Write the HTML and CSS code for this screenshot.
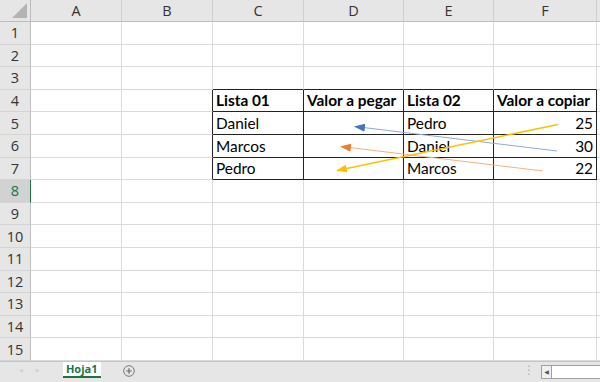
FILE: index.html
```html
<!DOCTYPE html>
<html lang="es">
<head>
  <meta charset="UTF-8">
  <meta name="viewport" content="width=device-width, initial-scale=1.0">
  <title>Hoja1 - Libro</title>
  <link rel="stylesheet" href="styles.css">
</head>
<body>
  <!-- Cuadricula de la hoja -->
  <div class="sheet">
    <div class="h corner"><span class="tri"></span></div><div class="h">A</div><div class="h">B</div><div class="h">C</div><div class="h">D</div><div class="h">E</div><div class="h">F</div><div class="h"></div>

    <div class="n">1</div><div class="c"></div><div class="c"></div><div class="c"></div><div class="c"></div><div class="c"></div><div class="c"></div><div class="c"></div>
    <div class="n">2</div><div class="c"></div><div class="c"></div><div class="c"></div><div class="c"></div><div class="c"></div><div class="c"></div><div class="c"></div>
    <div class="n">3</div><div class="c"></div><div class="c"></div><div class="c tt"></div><div class="c tt"></div><div class="c tt"></div><div class="c tt"></div><div class="c"></div>
    <div class="n">4</div><div class="c"></div><div class="c tl"></div><div class="c t b">Lista 01</div><div class="c t b">Valor a pegar</div><div class="c t b">Lista 02</div><div class="c t b">Valor a copiar</div><div class="c"></div>
    <div class="n">5</div><div class="c"></div><div class="c tl"></div><div class="c t">Daniel</div><div class="c t"></div><div class="c t">Pedro</div><div class="c t r">25</div><div class="c"></div>
    <div class="n">6</div><div class="c"></div><div class="c tl"></div><div class="c t">Marcos</div><div class="c t"></div><div class="c t">Daniel</div><div class="c t r">30</div><div class="c"></div>
    <div class="n">7</div><div class="c"></div><div class="c tl"></div><div class="c t">Pedro</div><div class="c t"></div><div class="c t">Marcos</div><div class="c t r">22</div><div class="c"></div>
    <div class="n sel">8</div><div class="c"></div><div class="c"></div><div class="c"></div><div class="c"></div><div class="c"></div><div class="c"></div><div class="c"></div>
    <div class="n">9</div><div class="c"></div><div class="c"></div><div class="c"></div><div class="c"></div><div class="c"></div><div class="c"></div><div class="c"></div>
    <div class="n">10</div><div class="c"></div><div class="c"></div><div class="c"></div><div class="c"></div><div class="c"></div><div class="c"></div><div class="c"></div>
    <div class="n">11</div><div class="c"></div><div class="c"></div><div class="c"></div><div class="c"></div><div class="c"></div><div class="c"></div><div class="c"></div>
    <div class="n">12</div><div class="c"></div><div class="c"></div><div class="c"></div><div class="c"></div><div class="c"></div><div class="c"></div><div class="c"></div>
    <div class="n">13</div><div class="c"></div><div class="c"></div><div class="c"></div><div class="c"></div><div class="c"></div><div class="c"></div><div class="c"></div>
    <div class="n">14</div><div class="c"></div><div class="c"></div><div class="c"></div><div class="c"></div><div class="c"></div><div class="c"></div><div class="c"></div>
    <div class="n">15</div><div class="c"></div><div class="c"></div><div class="c"></div><div class="c"></div><div class="c"></div><div class="c"></div><div class="c"></div>
  </div>

  <!-- Barra de hojas -->
  <div class="tabbar">
    <span class="nav">&#9664;</span>
    <span class="nav">&#9654;</span>
    <span class="tab">Hoja1</span>
    <svg class="add" width="12" height="12" viewBox="0 0 12 12">
      <circle cx="6" cy="6" r="5.3" fill="none" stroke="#7a7a7a" stroke-width="1"/>
      <path d="M6 3.2v5.6M3.2 6h5.6" stroke="#6a6a6a" stroke-width="1.2"/>
    </svg>
    <span class="spacer"></span>
    <span class="dots">&#8942;</span>
    <span class="scroll"><span class="scroll-btn">&#9664;</span></span>
  </div>

  <!-- Flechas dibujadas sobre la hoja -->
  <svg class="arrows" width="600" height="382" viewBox="0 0 600 382">
    <defs>
      <marker id="head-blue" markerUnits="userSpaceOnUse" markerWidth="11" markerHeight="8" refX="10" refY="4" orient="auto">
        <path d="M0 0L11 4L0 8z" fill="#4472c4"/>
      </marker>
      <marker id="head-orange" markerUnits="userSpaceOnUse" markerWidth="11" markerHeight="8" refX="10" refY="4" orient="auto">
        <path d="M0 0L11 4L0 8z" fill="#ed7d31"/>
      </marker>
      <marker id="head-yellow" markerUnits="userSpaceOnUse" markerWidth="11" markerHeight="8" refX="10" refY="4" orient="auto">
        <path d="M0 0L11 4L0 8z" fill="#ffc000"/>
      </marker>
    </defs>
    <line x1="557" y1="151" x2="355" y2="126.5" stroke="#8eaadb" stroke-width="1" marker-end="url(#head-blue)"/>
    <line x1="543" y1="171" x2="341" y2="146.5" stroke="#f4b183" stroke-width="1" marker-end="url(#head-orange)"/>
    <line x1="558" y1="124.5" x2="337" y2="170.5" stroke="#ffc000" stroke-width="1.6" marker-end="url(#head-yellow)"/>
  </svg>
</body>
</html>
```

FILE: styles.css
```css
/* Hoja de calculo */
body {
  margin: 0;
  width: 600px;
  height: 382px;
  overflow: hidden;
  position: relative;
  background: #fff;
  font-family: Lato, "Liberation Sans", sans-serif;
}

.sheet {
  display: grid;
  grid-template-columns: 31px 91px 91px 91px 100px 90px 103px 1fr;
  grid-template-rows: 22px repeat(15, 22.6px);
  width: 600px;
}

/* Encabezados de columna */
.h {
  background: #e6e6e6;
  border-right: 1px solid #cfcfcf;
  border-bottom: 1px solid #bdbdbd;
  color: #333;
  font: 14.5px "Open Sans", "DejaVu Sans", sans-serif;
  display: flex;
  align-items: center;
  justify-content: center;
  min-width: 0;
}

.corner {
  position: relative;
  border-right-color: #bdbdbd;
}

.tri {
  position: absolute;
  right: 3px;
  bottom: 3px;
  width: 0;
  height: 0;
  border-left: 15px solid transparent;
  border-bottom: 15px solid #b4b4b4;
}

/* Numeros de fila */
.n {
  background: #e6e6e6;
  border-right: 1px solid #bdbdbd;
  border-bottom: 1px solid #d4d4d4;
  color: #333;
  font: 14.5px "Open Sans", "DejaVu Sans", sans-serif;
  display: flex;
  align-items: center;
  justify-content: center;
}

.n.sel {
  background: #d2d2d2;
  color: #217346;
  border-right-color: #217346;
}

/* Celdas */
.c {
  border-right: 1px solid #dadada;
  border-bottom: 1px solid #dadada;
  padding: 0 3px 2px 3px;
  font-size: 15.4px;
  color: #000;
  display: flex;
  align-items: flex-end;
  white-space: nowrap;
  overflow: hidden;
  min-width: 0;
}

.c.t {
  border-right-color: #222;
  border-bottom-color: #222;
}

.c.tl {
  border-right-color: #222;
}

.c.tt {
  border-bottom-color: #222;
}

.b {
  font-weight: bold;
}

.r {
  justify-content: flex-end;
}

/* Barra inferior de hojas */
.tabbar {
  height: 20px;
  border-top: 1px solid #c6c6c6;
  background: #e6e6e6;
  display: flex;
  align-items: flex-start;
  font-family: "Open Sans", "DejaVu Sans", sans-serif;
}

.nav {
  color: #d0d0d0;
  font-size: 5px;
  line-height: 16px;
  margin-left: 19px;
}

.nav + .nav {
  margin-left: 13px;
}

.tab {
  margin-left: 23px;
  width: 38px;
  height: 14px;
  background: #fff;
  border-bottom: 2px solid #217346;
  color: #217346;
  font-size: 11px;
  font-weight: bold;
  line-height: 14px;
  text-align: center;
}

.add {
  margin: 3px 0 0 22px;
}

.spacer {
  flex: 1;
}

.dots {
  color: #b0b0b0;
  font-size: 12px;
  line-height: 16px;
  margin-right: 6px;
}

.scroll {
  margin-top: 3px;
  width: 58px;
  height: 12px;
  border: 1px solid #a0a0a0;
  border-right: none;
  background: #fff;
  display: flex;
}

.scroll-btn {
  width: 9px;
  border-right: 1px solid #a0a0a0;
  background: #f0f0f0;
  color: #555;
  font-size: 6px;
  line-height: 12px;
  text-align: center;
}

/* Flechas */
.arrows {
  position: absolute;
  top: 0;
  left: 0;
  pointer-events: none;
}
```
